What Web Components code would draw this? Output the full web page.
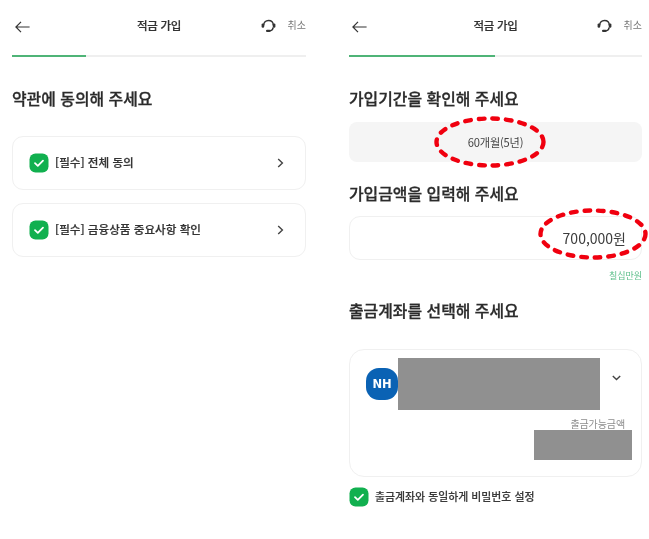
<!DOCTYPE html>
<html lang="ko"><head><meta charset="utf-8"><title>적금 가입</title>
<style>
html,body{margin:0;padding:0;background:#fff}
body{width:649px;height:539px;overflow:hidden;font-family:"Noto Sans CJK KR","Noto Sans",sans-serif;color:#333;filter:blur(.35px)}
</style></head><body>
<signup-app>
  <signup-panel progress="74">
    <step-title>약관에 동의해 주세요</step-title>
    <agree-card style="margin-top:25px">[필수] 전체 동의</agree-card>
    <agree-card style="margin-top:13px">[필수] 금융상품 중요사항 확인</agree-card>
  </signup-panel>
  <signup-panel progress="146">
    <step-title>가입기간을 확인해 주세요</step-title>
    <period-box style="margin-top:11px">60개월(5년)</period-box>
    <step-title style="margin-top:20px">가입금액을 입력해 주세요</step-title>
    <amount-box style="margin-top:10px" hint="칠십만원">700,000원</amount-box>
    <step-title style="margin-top:16px">출금계좌를 선택해 주세요</step-title>
    <account-card style="margin-top:26px"></account-card>
    <check-row style="margin-top:10px">출금계좌와 동일하게 비밀번호 설정</check-row>
  </signup-panel>
</signup-app>
<script>
function def(name, html, init){
  customElements.define(name, class extends HTMLElement{
    connectedCallback(){
      if(this.shadowRoot) return;
      const r=this.attachShadow({mode:'open'});
      r.innerHTML=html;
      if(init) init(this,r);
    }
  });
}
const ring=(w,h)=>`<svg width="${w}" height="${h}" viewBox="0 0 ${w} ${h}" fill="none"><ellipse cx="${w/2}" cy="${h/2}" rx="${w/2-2.5}" ry="${h/2-2.5}" stroke="#f0000f" stroke-width="4.4" stroke-linecap="round" stroke-dasharray="5.6 8"/></svg>`;
const checkSvg=`<svg width="20" height="20" viewBox="0 0 20 20"><rect x=".5" y=".5" width="19" height="19" rx="6" fill="#11b04f"/><path d="M6 10.2l2.8 2.7L14 7.6" fill="none" stroke="#fff" stroke-width="1.8" stroke-linecap="round" stroke-linejoin="round"/></svg>`;

def('signup-app',`<style>:host{display:grid;grid-template-columns:294px 293px;column-gap:43px;padding-left:12px}</style><slot></slot>`);

def('signup-panel',`<style>
:host{display:block}
.head{height:52px;display:flex;align-items:center;position:relative}
.back{display:block;margin-left:3px;margin-top:1px}
.t{position:absolute;left:0;right:0;top:15px;line-height:20px;text-align:center;font-size:11.5px;font-weight:500;color:#333;letter-spacing:-.3px;-webkit-text-stroke:.2px #333}
.cs{margin-left:auto;display:flex;align-items:center;gap:12px;font-size:10px;line-height:14px;color:#777}
.cs svg{display:block}
.cs span{position:relative;top:-1px}
.track{height:1.5px;margin-top:3px;background:#efefef;position:relative}
.bar{height:2px;background:#4fb477;position:absolute;left:0;top:0}
.body{padding-top:30.5px}
</style>
<div class="head">
  <svg class="back" width="15" height="12" viewBox="0 0 15 12" fill="none"><path d="M14.6 6H1M6 .8L.9 6 6 11.2" stroke="#333" stroke-width="1.2"/></svg>
  <div class="t">적금 가입</div>
  <div class="cs">
    <svg width="15" height="16" viewBox="0 0 15 16" fill="none"><path d="M2.7 7.4C2.7 4.4 4.7 2.5 7.5 2.5s4.8 1.9 4.8 4.9M12.2 9.4c-.2 2.1-1.6 3.2-3.2 3.5" stroke="#333" stroke-width="1.4"/><rect x=".6" y="5.4" width="2.6" height="4.4" rx="1.2" fill="#333"/><rect x="11.8" y="5.4" width="2.6" height="4.4" rx="1.2" fill="#333"/><rect x="5" y="11.7" width="4.6" height="2.3" rx="1.1" fill="#333"/></svg>
    <span>취소</span>
  </div>
</div>
<div class="track"><div class="bar"></div></div>
<div class="body"><slot></slot></div>`,(h,r)=>{r.querySelector('.bar').style.width=h.getAttribute('progress')+'px'});

def('step-title',`<style>:host{display:block;font-size:15.9px;line-height:24px;font-weight:500;color:#2b2b2b;-webkit-text-stroke:.3px #2b2b2b}</style><slot></slot>`);

def('check-mark',`<style>:host{display:block;width:20px;height:20px;flex:none}svg{display:block}</style>${checkSvg}`);

def('agree-card',`<style>
:host{display:flex;align-items:center;box-sizing:border-box;height:54px;border:1px solid #f0f0f0;border-radius:11px;padding:0 21px 0 16px;font-size:11.6px;font-weight:500;color:#333;-webkit-text-stroke:.2px #333}
span{margin-left:6px;flex:1;position:relative;top:-1px}
svg{display:block}
</style><check-mark></check-mark><span><slot></slot></span>
<svg width="7" height="10" viewBox="0 0 7 10" fill="none"><path d="M1.2 1L5.4 5 1.2 9" stroke="#444" stroke-width="1.4"/></svg>`);

def('period-box',`<style>
:host{display:flex;align-items:center;justify-content:center;height:40px;background:#f5f5f5;border-radius:8px;font-size:11.2px;color:#444;position:relative;letter-spacing:-.2px}
.r{position:absolute;left:85px;top:-6px;display:block}
</style><slot></slot><div class="r">${ring(112,52)}</div>`);

def('amount-box',`<style>
:host{display:block;position:relative}
.f{box-sizing:border-box;height:44px;border:1px solid #f0f0f0;border-radius:11px;display:flex;align-items:center;justify-content:flex-end;padding:0 15px;font-size:14px;color:#3c3c3c}
.h{margin-top:9px;text-align:right;font-size:9px;line-height:14px;color:#5cbf8a}
.r{position:absolute;left:189px;top:-8px}
</style><div class="f"><slot></slot></div><div class="h"></div><div class="r">${ring(110,52)}</div>`,(h,r)=>{r.querySelector('.h').textContent=h.getAttribute('hint')});

def('nh-logo',`<style>:host{display:flex;align-items:center;justify-content:center;width:32px;height:32px;flex:none;background:#0a62b4;border-radius:13px;color:#fff;font:700 11.5px "DejaVu Sans",sans-serif}</style>NH`);

def('account-card',`<style>
:host{display:block;box-sizing:border-box;height:128px;border:1px solid #f0f0f0;border-radius:15px;position:relative;padding:18px 16px 0}
.top{display:flex;align-items:center;height:32px;justify-content:space-between}
.top svg{display:block;margin-right:4px;margin-top:-12px}
.l{margin-top:15px;text-align:right;font-size:10px;line-height:18px;color:#8e8e8e;letter-spacing:-.1px}
.mask{position:absolute;background:#909090}
.m1{left:48px;top:8px;width:202px;height:52px}
.m2{left:184px;top:80px;width:98px;height:30px}
</style>
<div class="top"><nh-logo></nh-logo>
<svg width="9" height="6" viewBox="0 0 9 6" fill="none"><path d="M.8 1l3.7 3.6L8.2 1" stroke="#444" stroke-width="1.4"/></svg></div>
<div class="l">출금가능금액</div>
<div class="mask m1"></div><div class="mask m2"></div>`);

def('check-row',`<style>
:host{display:flex;align-items:center;gap:6px;font-size:10.9px;font-weight:500;color:#3a3a3a;-webkit-text-stroke:.15px #3a3a3a}
span{position:relative;top:-1px}
</style><check-mark></check-mark><span><slot></slot></span>`);
</script>
</body></html>
